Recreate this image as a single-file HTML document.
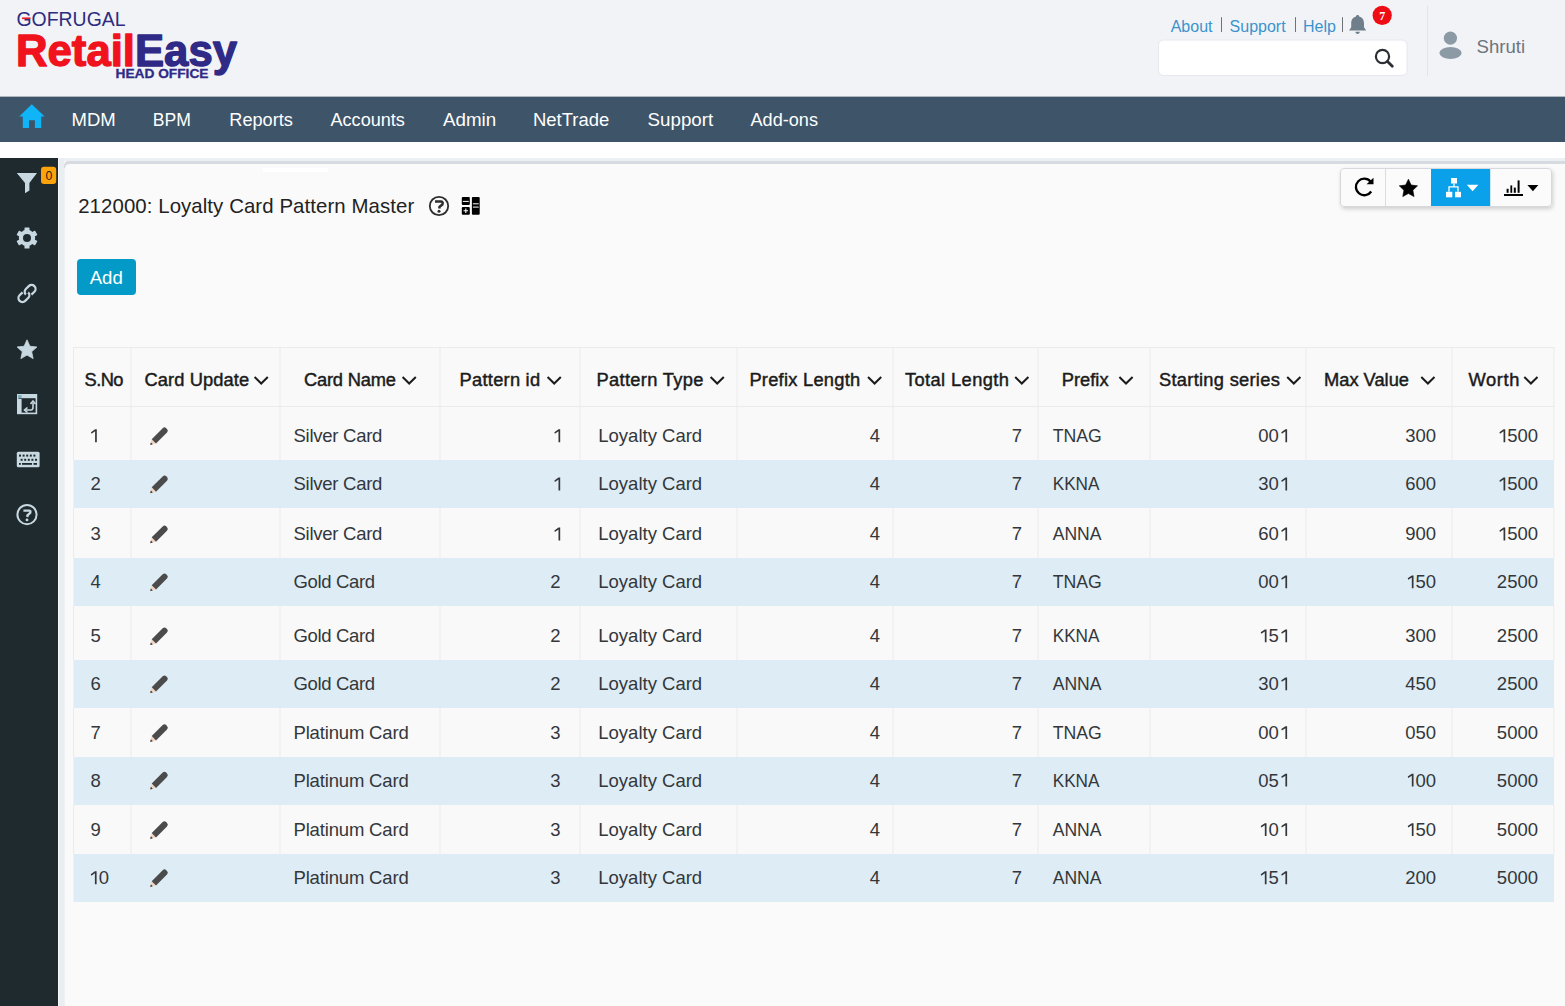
<!DOCTYPE html>
<html><head><meta charset="utf-8">
<style>
*{box-sizing:border-box;margin:0;padding:0}
html,body{width:1565px;height:1006px;overflow:hidden;background:#fafafa;font-family:"Liberation Sans",sans-serif}
svg{position:absolute;left:0;top:0}
</style></head><body>
<svg width="1565" height="1006" viewBox="0 0 1565 1006" font-family='"Liberation Sans", sans-serif'>

<rect x="0" y="0" width="1565" height="96" fill="#f2f3f7"/>
<rect x="0" y="96.6" width="1565" height="45.6" fill="#3e5469"/>
<rect x="0" y="142" width="1565" height="16" fill="#ffffff"/>
<rect x="0" y="158" width="58" height="848" fill="#1f2a2f"/>
<rect x="58" y="158" width="6" height="848" fill="#e9eef3"/>
<rect x="58" y="158" width="1" height="848" fill="#f6f8fa"/>
<rect x="64" y="158" width="1501" height="3" fill="#edf0f3"/>
<rect x="64" y="161" width="1501" height="845" fill="#fafafa"/>
<path d="M64,1006 L64,166 Q64,161 69,161 L1565,161 L1565,164 L70,164 Q65,164 65,168 L65,1006 Z" fill="#d6dbe1"/>
<rect x="64" y="168" width="1" height="838" fill="#eef1f4"/>
<rect x="263" y="168" width="65" height="4" fill="#ffffff"/>
<text x="16.5" y="25.6" font-size="20" fill="#2d2c80" textLength="109" lengthAdjust="spacingAndGlyphs">GOFRUGAL</text>
<rect x="22" y="17.4" width="8.5" height="1.7" fill="#e8232b"/>
<text x="16" y="66" font-size="44" font-weight="bold" stroke-width="1.3" stroke-linejoin="round" textLength="221" lengthAdjust="spacingAndGlyphs"><tspan fill="#f0121c" stroke="#f0121c">Retail</tspan><tspan fill="#2e2a86" stroke="#2e2a86">Easy</tspan></text>
<text x="115.5" y="78" font-size="13" font-weight="bold" fill="#2e2a86" stroke="#2e2a86" stroke-width="0.3" textLength="93" lengthAdjust="spacingAndGlyphs">HEAD OFFICE</text>
<text x="1170.7" y="31.9" font-size="16" fill="#3b93cc">About</text>
<text x="1229.6" y="31.9" font-size="16" fill="#3b93cc">Support</text>
<text x="1303" y="31.9" font-size="16" fill="#3b93cc">Help</text>
<rect x="1221" y="17.2" width="1" height="14.8" fill="#6e7378"/>
<rect x="1295" y="17.2" width="1" height="14.8" fill="#6e7378"/>
<rect x="1342" y="17.2" width="1" height="14.8" fill="#6e7378"/>
<path d="M1357.6,15 c1,0 1.6,.7 1.6,1.5 c3.4,.8 4.8,3.6 4.8,7.2 l0,3.6 l2.2,3.2 l-17.2,0 l2.2,-3.2 l0,-3.6 c0,-3.6 1.4,-6.4 4.8,-7.2 c0,-.8 .6,-1.5 1.6,-1.5 z M1355.4,31.8 l4.4,0 c0,1.3 -1,2.1 -2.2,2.1 c-1.2,0 -2.2,-.8 -2.2,-2.1 z" fill="#6e7e8b"/>
<circle cx="1382.2" cy="15.4" r="9.6" fill="#ee0d14"/>
<text x="1382.2" y="19.6" font-size="12" font-weight="bold" fill="#fff" text-anchor="middle" font-family="'Liberation Serif', serif">7</text>
<rect x="1158.5" y="40" width="248.5" height="35.5" rx="5" fill="#ffffff" stroke="#e5e8ee" stroke-width="1"/>
<circle cx="1382.5" cy="56.5" r="6.6" fill="none" stroke="#2b2f33" stroke-width="2.2"/>
<line x1="1387.5" y1="61.5" x2="1392.3" y2="66.3" stroke="#2b2f33" stroke-width="2.8" stroke-linecap="round"/>
<rect x="1427" y="6" width="1" height="70" fill="#e1e4e9"/>
<circle cx="1450.4" cy="38.2" r="6.6" fill="#8c9aa6"/>
<ellipse cx="1450.5" cy="53" rx="11.1" ry="6" fill="#8c9aa6"/>
<text x="1476.5" y="53.4" font-size="18.6" fill="#6d757d">Shruti</text>
<path d="M19.2,116.5 L31.8,104.2 L44.7,116.5 L41.2,116.5 L41.2,128 L34.9,128 L34.9,120.3 L29,120.3 L29,128 L22.8,128 L22.8,116.5 Z" fill="#0fb5f6"/>
<text x="71.6" y="125.9" font-size="19.2" fill="#ffffff" textLength="44.2" lengthAdjust="spacingAndGlyphs">MDM</text>
<text x="152.8" y="125.9" font-size="19.2" fill="#ffffff" textLength="38.1" lengthAdjust="spacingAndGlyphs">BPM</text>
<text x="229.3" y="125.9" font-size="19.2" fill="#ffffff" textLength="63.6" lengthAdjust="spacingAndGlyphs">Reports</text>
<text x="330.5" y="125.9" font-size="19.2" fill="#ffffff" textLength="74.4" lengthAdjust="spacingAndGlyphs">Accounts</text>
<text x="443" y="125.9" font-size="19.2" fill="#ffffff" textLength="53.2" lengthAdjust="spacingAndGlyphs">Admin</text>
<text x="533" y="125.9" font-size="19.2" fill="#ffffff" textLength="76.3" lengthAdjust="spacingAndGlyphs">NetTrade</text>
<text x="647.6" y="125.9" font-size="19.2" fill="#ffffff" textLength="65.6" lengthAdjust="spacingAndGlyphs">Support</text>
<text x="750.5" y="125.9" font-size="19.2" fill="#ffffff" textLength="67.5" lengthAdjust="spacingAndGlyphs">Add-ons</text>
<path d="M16.8,173 L37,173 L29.4,183 L29.4,190.5 L25,193.3 L25,183 Z" fill="#c8d8e0"/>
<rect x="41" y="166.8" width="15.2" height="17.2" rx="3" fill="#fca30c"/>
<text x="48.8" y="179.6" font-size="12.3" fill="#2e2108" text-anchor="middle">0</text>
<g transform="translate(27,238)" fill="#c8d8e0"><circle r="8.2"/><rect x="-2.5" y="-10.6" width="5" height="5" rx="0.6" transform="rotate(0)"/><rect x="-2.5" y="-10.6" width="5" height="5" rx="0.6" transform="rotate(60)"/><rect x="-2.5" y="-10.6" width="5" height="5" rx="0.6" transform="rotate(120)"/><rect x="-2.5" y="-10.6" width="5" height="5" rx="0.6" transform="rotate(180)"/><rect x="-2.5" y="-10.6" width="5" height="5" rx="0.6" transform="rotate(240)"/><rect x="-2.5" y="-10.6" width="5" height="5" rx="0.6" transform="rotate(300)"/><circle r="4" fill="#1f2a2f"/></g>
<g transform="translate(27,293.5) rotate(-45) scale(1.1)" fill="none" stroke="#c8d8e0" stroke-width="2.05" stroke-linecap="butt"><path d="M2.1,3.6 L5.9,3.6 A3.6,3.6 0 0,0 5.9,-3.6 L2.1,-3.6 A3.6,3.6 0 0,0 -1.5,0"/><path d="M-2.1,-3.6 L-5.9,-3.6 A3.6,3.6 0 0,0 -5.9,3.6 L-2.1,3.6 A3.6,3.6 0 0,0 1.5,0"/></g>
<path d="M27.00,339.80 L29.88,346.24 L36.89,346.99 L31.66,351.71 L33.11,358.61 L27.00,355.10 L20.89,358.61 L22.34,351.71 L17.11,346.99 L24.12,346.24 Z" fill="#c8d8e0" stroke="#c8d8e0" stroke-width="0.8" stroke-linejoin="round"/>
<rect x="17.8" y="394.8" width="18.6" height="18.6" fill="none" stroke="#c8d8e0" stroke-width="1.6"/>
<rect x="18" y="395" width="18" height="3.2" fill="#c8d8e0"/>
<rect x="18" y="399" width="3.6" height="14" fill="#c8d8e0"/>
<rect x="18" y="395" width="3.6" height="3.2" fill="#7fb0bf"/>
<path d="M25,410 L31,410 Q33,410 33,407 L33,402.5" fill="none" stroke="#c8d8e0" stroke-width="1.6"/>
<path d="M30.5,404 L33,401 L35.5,404" fill="none" stroke="#c8d8e0" stroke-width="1.6"/>
<path d="M27.5,407.5 L24.5,410 L27.5,412.5" fill="none" stroke="#c8d8e0" stroke-width="1.6"/>
<rect x="16.8" y="451.8" width="22.8" height="15.5" rx="1.5" fill="#c8d8e0"/>
<rect x="19" y="454.6" width="2" height="2" fill="#1f2a2f"/>
<rect x="22.6" y="454.6" width="2" height="2" fill="#1f2a2f"/>
<rect x="26.2" y="454.6" width="2" height="2" fill="#1f2a2f"/>
<rect x="29.8" y="454.6" width="2" height="2" fill="#1f2a2f"/>
<rect x="33.4" y="454.6" width="2" height="2" fill="#1f2a2f"/>
<rect x="20.6" y="458.8" width="2" height="2" fill="#1f2a2f"/>
<rect x="24.2" y="458.8" width="2" height="2" fill="#1f2a2f"/>
<rect x="27.8" y="458.8" width="2" height="2" fill="#1f2a2f"/>
<rect x="31.4" y="458.8" width="2" height="2" fill="#1f2a2f"/>
<rect x="35" y="458.8" width="2" height="2" fill="#1f2a2f"/>
<rect x="22" y="463" width="10" height="1.8" fill="#1f2a2f"/>
<rect x="19" y="463" width="1.8" height="1.8" fill="#1f2a2f"/>
<rect x="33.5" y="463" width="3.5" height="1.8" fill="#1f2a2f"/>
<circle cx="27" cy="514.6" r="9.6" fill="none" stroke="#c8d8e0" stroke-width="2"/>
<path d="M23.4,510.6 L29,510.6 Q31,510.6 30.2,512.8 L27.5,515.3 L27.3,517" fill="none" stroke="#c8d8e0" stroke-width="2.4"/>
<circle cx="27" cy="519.9" r="1.4" fill="#c8d8e0"/>
<text x="78.2" y="212.7" font-size="20.4" fill="#222" textLength="336" lengthAdjust="spacing">212000: Loyalty Card Pattern Master</text>
<circle cx="439" cy="206" r="9.2" fill="none" stroke="#2d2d2d" stroke-width="1.8"/>
<path d="M435,201.6 L441.2,201.6 Q443.4,201.8 442.4,204.4 L439.6,206.8 L439.2,208.6" fill="none" stroke="#2d2d2d" stroke-width="2.5"/>
<circle cx="439" cy="211.2" r="1.5" fill="#2d2d2d"/>
<rect x="461.8" y="197" width="8" height="8" rx="1" fill="#000"/>
<rect x="462.8" y="200.9" width="6" height="1" fill="#fff"/>
<rect x="461.8" y="207" width="8" height="7.7" rx="1" fill="#000"/>
<path d="M465.8,208.5 L465.8,213 M463.5,210.8 L468.1,210.8" stroke="#fff" stroke-width="1.1"/>
<rect x="471.9" y="197" width="7.8" height="17.7" rx="1" fill="#000"/>
<rect x="472.9" y="203.3" width="5.8" height="1" fill="#fff"/>
<rect x="472.9" y="206.6" width="5.8" height="1" fill="#fff"/>
<rect x="77" y="259" width="59" height="36" rx="4" fill="#039ac8"/>
<text x="89.7" y="283.6" font-size="18.6" fill="#fff">Add</text>
<defs><filter id="sh" x="-10%" y="-30%" width="120%" height="170%"><feGaussianBlur in="SourceAlpha" stdDeviation="2"/><feOffset dx="1" dy="2"/><feComponentTransfer><feFuncA type="linear" slope="0.18"/></feComponentTransfer><feMerge><feMergeNode/><feMergeNode in="SourceGraphic"/></feMerge></filter></defs>
<rect x="1340.5" y="168.5" width="211" height="38" rx="3.5" fill="#fbfbfb" stroke="#d6d8db" stroke-width="1" filter="url(#sh)"/>
<rect x="1385" y="169" width="1" height="37" fill="#dcdcdc"/>
<rect x="1431" y="169" width="59.2" height="37" fill="#0aa0ea"/>
<path d="M1371.2,191.5 A8.3,8.3 0 1,1 1370.5,181.5" fill="none" stroke="#000" stroke-width="2.3"/>
<path d="M1366.5,184.3 L1373.5,184.3 L1373.5,177.8 Z" fill="#000"/>
<path d="M1408.40,179.20 L1411.16,185.00 L1417.53,185.83 L1412.87,190.25 L1414.04,196.57 L1408.40,193.50 L1402.76,196.57 L1403.93,190.25 L1399.27,185.83 L1405.64,185.00 Z" fill="#000" stroke="#000" stroke-width="0.6" stroke-linejoin="round"/>
<rect x="1451" y="178" width="6" height="5.5" fill="#fff"/>
<path d="M1454,183.5 L1454,186.8 M1449,191.8 L1449,186.8 L1458,186.8 L1458,191.8" fill="none" stroke="#fff" stroke-width="1.3"/>
<rect x="1446" y="191.8" width="6.3" height="5.5" fill="#fff"/>
<rect x="1455" y="191.8" width="6" height="5.5" fill="#fff"/>
<path d="M1466.8,184.8 L1478.4,184.8 L1472.6,191.3 Z" fill="#fff"/>
<rect x="1504" y="194" width="19" height="2" fill="#000"/>
<rect x="1506.6" y="188.8" width="2" height="4" fill="#000"/>
<rect x="1510.4" y="185.4" width="1.8" height="7.4" fill="#000"/>
<rect x="1513.8" y="187.6" width="2" height="5.2" fill="#000"/>
<rect x="1517.6" y="180.4" width="2" height="12.4" fill="#000"/>
<path d="M1527.4,185 L1538.4,185 L1532.9,191.3 Z" fill="#000"/>
<rect x="73.5" y="347" width="1480.5" height="555" fill="#f9f9f9"/>
<rect x="73.5" y="460" width="1480.5" height="48" fill="#deecf5"/>
<rect x="73.5" y="558" width="1480.5" height="48" fill="#deecf5"/>
<rect x="73.5" y="660" width="1480.5" height="48" fill="#deecf5"/>
<rect x="73.5" y="757" width="1480.5" height="48" fill="#deecf5"/>
<rect x="73.5" y="854" width="1480.5" height="48" fill="#deecf5"/>
<rect x="73.5" y="347" width="1480.5" height="1" fill="#ebebeb"/>
<rect x="73.5" y="406" width="1480.5" height="1" fill="#ebebeb"/>
<rect x="73.0" y="347" width="1" height="60" fill="#ebebeb"/>
<rect x="73.0" y="407" width="1" height="53" fill="#ebebeb"/>
<rect x="73.0" y="508" width="1" height="50" fill="#ebebeb"/>
<rect x="73.0" y="606" width="1" height="54" fill="#ebebeb"/>
<rect x="73.0" y="708" width="1" height="49" fill="#ebebeb"/>
<rect x="73.0" y="805" width="1" height="49" fill="#ebebeb"/>
<rect x="130.5" y="347" width="1" height="60" fill="#ebebeb"/>
<rect x="130.5" y="407" width="1" height="53" fill="#ebebeb"/>
<rect x="130.5" y="508" width="1" height="50" fill="#ebebeb"/>
<rect x="130.5" y="606" width="1" height="54" fill="#ebebeb"/>
<rect x="130.5" y="708" width="1" height="49" fill="#ebebeb"/>
<rect x="130.5" y="805" width="1" height="49" fill="#ebebeb"/>
<rect x="279.5" y="347" width="1" height="60" fill="#ebebeb"/>
<rect x="279.5" y="407" width="1" height="53" fill="#ebebeb"/>
<rect x="279.5" y="508" width="1" height="50" fill="#ebebeb"/>
<rect x="279.5" y="606" width="1" height="54" fill="#ebebeb"/>
<rect x="279.5" y="708" width="1" height="49" fill="#ebebeb"/>
<rect x="279.5" y="805" width="1" height="49" fill="#ebebeb"/>
<rect x="439.5" y="347" width="1" height="60" fill="#ebebeb"/>
<rect x="439.5" y="407" width="1" height="53" fill="#ebebeb"/>
<rect x="439.5" y="508" width="1" height="50" fill="#ebebeb"/>
<rect x="439.5" y="606" width="1" height="54" fill="#ebebeb"/>
<rect x="439.5" y="708" width="1" height="49" fill="#ebebeb"/>
<rect x="439.5" y="805" width="1" height="49" fill="#ebebeb"/>
<rect x="579.5" y="347" width="1" height="60" fill="#ebebeb"/>
<rect x="579.5" y="407" width="1" height="53" fill="#ebebeb"/>
<rect x="579.5" y="508" width="1" height="50" fill="#ebebeb"/>
<rect x="579.5" y="606" width="1" height="54" fill="#ebebeb"/>
<rect x="579.5" y="708" width="1" height="49" fill="#ebebeb"/>
<rect x="579.5" y="805" width="1" height="49" fill="#ebebeb"/>
<rect x="736.5" y="347" width="1" height="60" fill="#ebebeb"/>
<rect x="736.5" y="407" width="1" height="53" fill="#ebebeb"/>
<rect x="736.5" y="508" width="1" height="50" fill="#ebebeb"/>
<rect x="736.5" y="606" width="1" height="54" fill="#ebebeb"/>
<rect x="736.5" y="708" width="1" height="49" fill="#ebebeb"/>
<rect x="736.5" y="805" width="1" height="49" fill="#ebebeb"/>
<rect x="892.5" y="347" width="1" height="60" fill="#ebebeb"/>
<rect x="892.5" y="407" width="1" height="53" fill="#ebebeb"/>
<rect x="892.5" y="508" width="1" height="50" fill="#ebebeb"/>
<rect x="892.5" y="606" width="1" height="54" fill="#ebebeb"/>
<rect x="892.5" y="708" width="1" height="49" fill="#ebebeb"/>
<rect x="892.5" y="805" width="1" height="49" fill="#ebebeb"/>
<rect x="1037.5" y="347" width="1" height="60" fill="#ebebeb"/>
<rect x="1037.5" y="407" width="1" height="53" fill="#ebebeb"/>
<rect x="1037.5" y="508" width="1" height="50" fill="#ebebeb"/>
<rect x="1037.5" y="606" width="1" height="54" fill="#ebebeb"/>
<rect x="1037.5" y="708" width="1" height="49" fill="#ebebeb"/>
<rect x="1037.5" y="805" width="1" height="49" fill="#ebebeb"/>
<rect x="1149.5" y="347" width="1" height="60" fill="#ebebeb"/>
<rect x="1149.5" y="407" width="1" height="53" fill="#ebebeb"/>
<rect x="1149.5" y="508" width="1" height="50" fill="#ebebeb"/>
<rect x="1149.5" y="606" width="1" height="54" fill="#ebebeb"/>
<rect x="1149.5" y="708" width="1" height="49" fill="#ebebeb"/>
<rect x="1149.5" y="805" width="1" height="49" fill="#ebebeb"/>
<rect x="1305.5" y="347" width="1" height="60" fill="#ebebeb"/>
<rect x="1305.5" y="407" width="1" height="53" fill="#ebebeb"/>
<rect x="1305.5" y="508" width="1" height="50" fill="#ebebeb"/>
<rect x="1305.5" y="606" width="1" height="54" fill="#ebebeb"/>
<rect x="1305.5" y="708" width="1" height="49" fill="#ebebeb"/>
<rect x="1305.5" y="805" width="1" height="49" fill="#ebebeb"/>
<rect x="1451.5" y="347" width="1" height="60" fill="#ebebeb"/>
<rect x="1451.5" y="407" width="1" height="53" fill="#ebebeb"/>
<rect x="1451.5" y="508" width="1" height="50" fill="#ebebeb"/>
<rect x="1451.5" y="606" width="1" height="54" fill="#ebebeb"/>
<rect x="1451.5" y="708" width="1" height="49" fill="#ebebeb"/>
<rect x="1451.5" y="805" width="1" height="49" fill="#ebebeb"/>
<rect x="1553.5" y="347" width="1" height="60" fill="#ebebeb"/>
<rect x="1553.5" y="407" width="1" height="53" fill="#ebebeb"/>
<rect x="1553.5" y="508" width="1" height="50" fill="#ebebeb"/>
<rect x="1553.5" y="606" width="1" height="54" fill="#ebebeb"/>
<rect x="1553.5" y="708" width="1" height="49" fill="#ebebeb"/>
<rect x="1553.5" y="805" width="1" height="49" fill="#ebebeb"/>
<text x="84.5" y="385.5" font-size="18.3" fill="#1b1b1b" stroke="#1b1b1b" stroke-width="0.45" textLength="39" lengthAdjust="spacing">S.No</text>
<text x="144.5" y="385.5" font-size="18.3" fill="#1b1b1b" stroke="#1b1b1b" stroke-width="0.45" textLength="104.6" lengthAdjust="spacing">Card Update</text>
<path d="M254.6,377 L261.2,383.5 L267.8,377" fill="none" stroke="#1b1b1b" stroke-width="2"/>
<text x="304" y="385.5" font-size="18.3" fill="#1b1b1b" stroke="#1b1b1b" stroke-width="0.45" textLength="91.9" lengthAdjust="spacing">Card Name</text>
<path d="M402.6,377 L409.2,383.5 L415.8,377" fill="none" stroke="#1b1b1b" stroke-width="2"/>
<text x="459.6" y="385.5" font-size="18.3" fill="#1b1b1b" stroke="#1b1b1b" stroke-width="0.45" textLength="80.5" lengthAdjust="spacing">Pattern id</text>
<path d="M547.6,377 L554.2,383.5 L560.8,377" fill="none" stroke="#1b1b1b" stroke-width="2"/>
<text x="596.6" y="385.5" font-size="18.3" fill="#1b1b1b" stroke="#1b1b1b" stroke-width="0.45" textLength="106.7" lengthAdjust="spacing">Pattern Type</text>
<path d="M710.6,377 L717.2,383.5 L723.8,377" fill="none" stroke="#1b1b1b" stroke-width="2"/>
<text x="749.4" y="385.5" font-size="18.3" fill="#1b1b1b" stroke="#1b1b1b" stroke-width="0.45" textLength="110.8" lengthAdjust="spacing">Prefix Length</text>
<path d="M868.0,377 L874.6,383.5 L881.1999999999999,377" fill="none" stroke="#1b1b1b" stroke-width="2"/>
<text x="905" y="385.5" font-size="18.3" fill="#1b1b1b" stroke="#1b1b1b" stroke-width="0.45" textLength="103.9" lengthAdjust="spacing">Total Length</text>
<path d="M1015.2,377 L1021.8000000000001,383.5 L1028.4,377" fill="none" stroke="#1b1b1b" stroke-width="2"/>
<text x="1061.8" y="385.5" font-size="18.3" fill="#1b1b1b" stroke="#1b1b1b" stroke-width="0.45">Prefix</text>
<path d="M1119.3999999999999,377 L1126.0,383.5 L1132.6,377" fill="none" stroke="#1b1b1b" stroke-width="2"/>
<text x="1159" y="385.5" font-size="18.3" fill="#1b1b1b" stroke="#1b1b1b" stroke-width="0.45" textLength="120.8" lengthAdjust="spacing">Starting series</text>
<path d="M1287.1999999999998,377 L1293.8,383.5 L1300.3999999999999,377" fill="none" stroke="#1b1b1b" stroke-width="2"/>
<text x="1324" y="385.5" font-size="18.3" fill="#1b1b1b" stroke="#1b1b1b" stroke-width="0.45" textLength="85" lengthAdjust="spacing">Max Value</text>
<path d="M1421.3,377 L1427.9,383.5 L1434.5,377" fill="none" stroke="#1b1b1b" stroke-width="2"/>
<text x="1468.4" y="385.5" font-size="18.3" fill="#1b1b1b" stroke="#1b1b1b" stroke-width="0.45" textLength="51" lengthAdjust="spacing">Worth</text>
<path d="M1524.3,377 L1530.9,383.5 L1537.5,377" fill="none" stroke="#1b1b1b" stroke-width="2"/>
<path transform="translate(90.8,442.2)" d="M4.3,-12.9 L6,-12.9 L6,0 L4.3,0 L4.3,-10.9 L0.7,-8.5 L0.2,-10 Z" fill="#33373b"/>
<g transform="translate(150.2,445.0) rotate(-45)"><path d="M0,0 L5.4,-3.05 L5.4,3.05 Z" fill="#f3d3c0"/><path d="M0,0 L2.3,-1.35 L2.3,1.35 Z" fill="#333"/><path d="M5.2,-3.05 L20.7,-3.05 Q23.2,-3.05 23.2,-0.6 L23.2,0.6 Q23.2,3.05 20.7,3.05 L5.2,3.05 Z" fill="#4b4b4b"/></g>
<text x="293.5" y="442.2" font-size="18.5" fill="#33373b" textLength="88.9" lengthAdjust="spacing">Silver Card</text>
<path transform="translate(554.2,442.2)" d="M4.3,-12.9 L6,-12.9 L6,0 L4.3,0 L4.3,-10.9 L0.7,-8.5 L0.2,-10 Z" fill="#33373b"/>
<text x="598.3" y="442.2" font-size="18.5" fill="#33373b">Loyalty Card</text>
<text x="880" y="442.2" font-size="18.5" fill="#33373b" text-anchor="end">4</text>
<text x="1022" y="442.2" font-size="18.5" fill="#33373b" text-anchor="end">7</text>
<text x="1052.7" y="442.2" font-size="18.5" fill="#33373b" textLength="49.1" lengthAdjust="spacingAndGlyphs">TNAG</text>
<text x="1289" y="442.2" font-size="18.5" fill="#33373b" text-anchor="end" xml:space="preserve">00 </text><path transform="translate(1281.11,442.2)" d="M4.3,-12.9 L6,-12.9 L6,0 L4.3,0 L4.3,-10.9 L0.7,-8.5 L0.2,-10 Z" fill="#33373b"/>
<text x="1436" y="442.2" font-size="18.5" fill="#33373b" text-anchor="end" xml:space="preserve">300</text>
<text x="1538" y="442.2" font-size="18.5" fill="#33373b" text-anchor="end" xml:space="preserve"> 500</text><path transform="translate(1499.24,442.2)" d="M4.3,-12.9 L6,-12.9 L6,0 L4.3,0 L4.3,-10.9 L0.7,-8.5 L0.2,-10 Z" fill="#33373b"/>
<text x="90.5" y="490.4" font-size="18.5" fill="#33373b">2</text>
<g transform="translate(150.2,493.2) rotate(-45)"><path d="M0,0 L5.4,-3.05 L5.4,3.05 Z" fill="#f3d3c0"/><path d="M0,0 L2.3,-1.35 L2.3,1.35 Z" fill="#333"/><path d="M5.2,-3.05 L20.7,-3.05 Q23.2,-3.05 23.2,-0.6 L23.2,0.6 Q23.2,3.05 20.7,3.05 L5.2,3.05 Z" fill="#4b4b4b"/></g>
<text x="293.5" y="490.4" font-size="18.5" fill="#33373b" textLength="88.9" lengthAdjust="spacing">Silver Card</text>
<path transform="translate(554.2,490.4)" d="M4.3,-12.9 L6,-12.9 L6,0 L4.3,0 L4.3,-10.9 L0.7,-8.5 L0.2,-10 Z" fill="#33373b"/>
<text x="598.3" y="490.4" font-size="18.5" fill="#33373b">Loyalty Card</text>
<text x="880" y="490.4" font-size="18.5" fill="#33373b" text-anchor="end">4</text>
<text x="1022" y="490.4" font-size="18.5" fill="#33373b" text-anchor="end">7</text>
<text x="1052.7" y="490.4" font-size="18.5" fill="#33373b" textLength="46.8" lengthAdjust="spacingAndGlyphs">KKNA</text>
<text x="1289" y="490.4" font-size="18.5" fill="#33373b" text-anchor="end" xml:space="preserve">30 </text><path transform="translate(1281.11,490.4)" d="M4.3,-12.9 L6,-12.9 L6,0 L4.3,0 L4.3,-10.9 L0.7,-8.5 L0.2,-10 Z" fill="#33373b"/>
<text x="1436" y="490.4" font-size="18.5" fill="#33373b" text-anchor="end" xml:space="preserve">600</text>
<text x="1538" y="490.4" font-size="18.5" fill="#33373b" text-anchor="end" xml:space="preserve"> 500</text><path transform="translate(1499.24,490.4)" d="M4.3,-12.9 L6,-12.9 L6,0 L4.3,0 L4.3,-10.9 L0.7,-8.5 L0.2,-10 Z" fill="#33373b"/>
<text x="90.5" y="540.4" font-size="18.5" fill="#33373b">3</text>
<g transform="translate(150.2,543.1999999999999) rotate(-45)"><path d="M0,0 L5.4,-3.05 L5.4,3.05 Z" fill="#f3d3c0"/><path d="M0,0 L2.3,-1.35 L2.3,1.35 Z" fill="#333"/><path d="M5.2,-3.05 L20.7,-3.05 Q23.2,-3.05 23.2,-0.6 L23.2,0.6 Q23.2,3.05 20.7,3.05 L5.2,3.05 Z" fill="#4b4b4b"/></g>
<text x="293.5" y="540.4" font-size="18.5" fill="#33373b" textLength="88.9" lengthAdjust="spacing">Silver Card</text>
<path transform="translate(554.2,540.4)" d="M4.3,-12.9 L6,-12.9 L6,0 L4.3,0 L4.3,-10.9 L0.7,-8.5 L0.2,-10 Z" fill="#33373b"/>
<text x="598.3" y="540.4" font-size="18.5" fill="#33373b">Loyalty Card</text>
<text x="880" y="540.4" font-size="18.5" fill="#33373b" text-anchor="end">4</text>
<text x="1022" y="540.4" font-size="18.5" fill="#33373b" text-anchor="end">7</text>
<text x="1052.7" y="540.4" font-size="18.5" fill="#33373b" textLength="48.8" lengthAdjust="spacingAndGlyphs">ANNA</text>
<text x="1289" y="540.4" font-size="18.5" fill="#33373b" text-anchor="end" xml:space="preserve">60 </text><path transform="translate(1281.11,540.4)" d="M4.3,-12.9 L6,-12.9 L6,0 L4.3,0 L4.3,-10.9 L0.7,-8.5 L0.2,-10 Z" fill="#33373b"/>
<text x="1436" y="540.4" font-size="18.5" fill="#33373b" text-anchor="end" xml:space="preserve">900</text>
<text x="1538" y="540.4" font-size="18.5" fill="#33373b" text-anchor="end" xml:space="preserve"> 500</text><path transform="translate(1499.24,540.4)" d="M4.3,-12.9 L6,-12.9 L6,0 L4.3,0 L4.3,-10.9 L0.7,-8.5 L0.2,-10 Z" fill="#33373b"/>
<text x="90.5" y="588.3" font-size="18.5" fill="#33373b">4</text>
<g transform="translate(150.2,591.0999999999999) rotate(-45)"><path d="M0,0 L5.4,-3.05 L5.4,3.05 Z" fill="#f3d3c0"/><path d="M0,0 L2.3,-1.35 L2.3,1.35 Z" fill="#333"/><path d="M5.2,-3.05 L20.7,-3.05 Q23.2,-3.05 23.2,-0.6 L23.2,0.6 Q23.2,3.05 20.7,3.05 L5.2,3.05 Z" fill="#4b4b4b"/></g>
<text x="293.5" y="588.3" font-size="18.5" fill="#33373b" textLength="81.5" lengthAdjust="spacing">Gold Card</text>
<text x="560.5" y="588.3" font-size="18.5" fill="#33373b" text-anchor="end">2</text>
<text x="598.3" y="588.3" font-size="18.5" fill="#33373b">Loyalty Card</text>
<text x="880" y="588.3" font-size="18.5" fill="#33373b" text-anchor="end">4</text>
<text x="1022" y="588.3" font-size="18.5" fill="#33373b" text-anchor="end">7</text>
<text x="1052.7" y="588.3" font-size="18.5" fill="#33373b" textLength="49.1" lengthAdjust="spacingAndGlyphs">TNAG</text>
<text x="1289" y="588.3" font-size="18.5" fill="#33373b" text-anchor="end" xml:space="preserve">00 </text><path transform="translate(1281.11,588.3)" d="M4.3,-12.9 L6,-12.9 L6,0 L4.3,0 L4.3,-10.9 L0.7,-8.5 L0.2,-10 Z" fill="#33373b"/>
<text x="1436" y="588.3" font-size="18.5" fill="#33373b" text-anchor="end" xml:space="preserve"> 50</text><path transform="translate(1407.53,588.3)" d="M4.3,-12.9 L6,-12.9 L6,0 L4.3,0 L4.3,-10.9 L0.7,-8.5 L0.2,-10 Z" fill="#33373b"/>
<text x="1538" y="588.3" font-size="18.5" fill="#33373b" text-anchor="end" xml:space="preserve">2500</text>
<text x="90.5" y="642.3" font-size="18.5" fill="#33373b">5</text>
<g transform="translate(150.2,645.0999999999999) rotate(-45)"><path d="M0,0 L5.4,-3.05 L5.4,3.05 Z" fill="#f3d3c0"/><path d="M0,0 L2.3,-1.35 L2.3,1.35 Z" fill="#333"/><path d="M5.2,-3.05 L20.7,-3.05 Q23.2,-3.05 23.2,-0.6 L23.2,0.6 Q23.2,3.05 20.7,3.05 L5.2,3.05 Z" fill="#4b4b4b"/></g>
<text x="293.5" y="642.3" font-size="18.5" fill="#33373b" textLength="81.5" lengthAdjust="spacing">Gold Card</text>
<text x="560.5" y="642.3" font-size="18.5" fill="#33373b" text-anchor="end">2</text>
<text x="598.3" y="642.3" font-size="18.5" fill="#33373b">Loyalty Card</text>
<text x="880" y="642.3" font-size="18.5" fill="#33373b" text-anchor="end">4</text>
<text x="1022" y="642.3" font-size="18.5" fill="#33373b" text-anchor="end">7</text>
<text x="1052.7" y="642.3" font-size="18.5" fill="#33373b" textLength="46.8" lengthAdjust="spacingAndGlyphs">KKNA</text>
<text x="1289" y="642.3" font-size="18.5" fill="#33373b" text-anchor="end" xml:space="preserve"> 5 </text><path transform="translate(1260.53,642.3)" d="M4.3,-12.9 L6,-12.9 L6,0 L4.3,0 L4.3,-10.9 L0.7,-8.5 L0.2,-10 Z" fill="#33373b"/><path transform="translate(1281.11,642.3)" d="M4.3,-12.9 L6,-12.9 L6,0 L4.3,0 L4.3,-10.9 L0.7,-8.5 L0.2,-10 Z" fill="#33373b"/>
<text x="1436" y="642.3" font-size="18.5" fill="#33373b" text-anchor="end" xml:space="preserve">300</text>
<text x="1538" y="642.3" font-size="18.5" fill="#33373b" text-anchor="end" xml:space="preserve">2500</text>
<text x="90.5" y="690.3" font-size="18.5" fill="#33373b">6</text>
<g transform="translate(150.2,693.0999999999999) rotate(-45)"><path d="M0,0 L5.4,-3.05 L5.4,3.05 Z" fill="#f3d3c0"/><path d="M0,0 L2.3,-1.35 L2.3,1.35 Z" fill="#333"/><path d="M5.2,-3.05 L20.7,-3.05 Q23.2,-3.05 23.2,-0.6 L23.2,0.6 Q23.2,3.05 20.7,3.05 L5.2,3.05 Z" fill="#4b4b4b"/></g>
<text x="293.5" y="690.3" font-size="18.5" fill="#33373b" textLength="81.5" lengthAdjust="spacing">Gold Card</text>
<text x="560.5" y="690.3" font-size="18.5" fill="#33373b" text-anchor="end">2</text>
<text x="598.3" y="690.3" font-size="18.5" fill="#33373b">Loyalty Card</text>
<text x="880" y="690.3" font-size="18.5" fill="#33373b" text-anchor="end">4</text>
<text x="1022" y="690.3" font-size="18.5" fill="#33373b" text-anchor="end">7</text>
<text x="1052.7" y="690.3" font-size="18.5" fill="#33373b" textLength="48.8" lengthAdjust="spacingAndGlyphs">ANNA</text>
<text x="1289" y="690.3" font-size="18.5" fill="#33373b" text-anchor="end" xml:space="preserve">30 </text><path transform="translate(1281.11,690.3)" d="M4.3,-12.9 L6,-12.9 L6,0 L4.3,0 L4.3,-10.9 L0.7,-8.5 L0.2,-10 Z" fill="#33373b"/>
<text x="1436" y="690.3" font-size="18.5" fill="#33373b" text-anchor="end" xml:space="preserve">450</text>
<text x="1538" y="690.3" font-size="18.5" fill="#33373b" text-anchor="end" xml:space="preserve">2500</text>
<text x="90.5" y="739.1" font-size="18.5" fill="#33373b">7</text>
<g transform="translate(150.2,741.9) rotate(-45)"><path d="M0,0 L5.4,-3.05 L5.4,3.05 Z" fill="#f3d3c0"/><path d="M0,0 L2.3,-1.35 L2.3,1.35 Z" fill="#333"/><path d="M5.2,-3.05 L20.7,-3.05 Q23.2,-3.05 23.2,-0.6 L23.2,0.6 Q23.2,3.05 20.7,3.05 L5.2,3.05 Z" fill="#4b4b4b"/></g>
<text x="293.5" y="739.1" font-size="18.5" fill="#33373b" textLength="115.2" lengthAdjust="spacing">Platinum Card</text>
<text x="560.5" y="739.1" font-size="18.5" fill="#33373b" text-anchor="end">3</text>
<text x="598.3" y="739.1" font-size="18.5" fill="#33373b">Loyalty Card</text>
<text x="880" y="739.1" font-size="18.5" fill="#33373b" text-anchor="end">4</text>
<text x="1022" y="739.1" font-size="18.5" fill="#33373b" text-anchor="end">7</text>
<text x="1052.7" y="739.1" font-size="18.5" fill="#33373b" textLength="49.1" lengthAdjust="spacingAndGlyphs">TNAG</text>
<text x="1289" y="739.1" font-size="18.5" fill="#33373b" text-anchor="end" xml:space="preserve">00 </text><path transform="translate(1281.11,739.1)" d="M4.3,-12.9 L6,-12.9 L6,0 L4.3,0 L4.3,-10.9 L0.7,-8.5 L0.2,-10 Z" fill="#33373b"/>
<text x="1436" y="739.1" font-size="18.5" fill="#33373b" text-anchor="end" xml:space="preserve">050</text>
<text x="1538" y="739.1" font-size="18.5" fill="#33373b" text-anchor="end" xml:space="preserve">5000</text>
<text x="90.5" y="786.6" font-size="18.5" fill="#33373b">8</text>
<g transform="translate(150.2,789.4) rotate(-45)"><path d="M0,0 L5.4,-3.05 L5.4,3.05 Z" fill="#f3d3c0"/><path d="M0,0 L2.3,-1.35 L2.3,1.35 Z" fill="#333"/><path d="M5.2,-3.05 L20.7,-3.05 Q23.2,-3.05 23.2,-0.6 L23.2,0.6 Q23.2,3.05 20.7,3.05 L5.2,3.05 Z" fill="#4b4b4b"/></g>
<text x="293.5" y="786.6" font-size="18.5" fill="#33373b" textLength="115.2" lengthAdjust="spacing">Platinum Card</text>
<text x="560.5" y="786.6" font-size="18.5" fill="#33373b" text-anchor="end">3</text>
<text x="598.3" y="786.6" font-size="18.5" fill="#33373b">Loyalty Card</text>
<text x="880" y="786.6" font-size="18.5" fill="#33373b" text-anchor="end">4</text>
<text x="1022" y="786.6" font-size="18.5" fill="#33373b" text-anchor="end">7</text>
<text x="1052.7" y="786.6" font-size="18.5" fill="#33373b" textLength="46.8" lengthAdjust="spacingAndGlyphs">KKNA</text>
<text x="1289" y="786.6" font-size="18.5" fill="#33373b" text-anchor="end" xml:space="preserve">05 </text><path transform="translate(1281.11,786.6)" d="M4.3,-12.9 L6,-12.9 L6,0 L4.3,0 L4.3,-10.9 L0.7,-8.5 L0.2,-10 Z" fill="#33373b"/>
<text x="1436" y="786.6" font-size="18.5" fill="#33373b" text-anchor="end" xml:space="preserve"> 00</text><path transform="translate(1407.53,786.6)" d="M4.3,-12.9 L6,-12.9 L6,0 L4.3,0 L4.3,-10.9 L0.7,-8.5 L0.2,-10 Z" fill="#33373b"/>
<text x="1538" y="786.6" font-size="18.5" fill="#33373b" text-anchor="end" xml:space="preserve">5000</text>
<text x="90.5" y="836.1" font-size="18.5" fill="#33373b">9</text>
<g transform="translate(150.2,838.9) rotate(-45)"><path d="M0,0 L5.4,-3.05 L5.4,3.05 Z" fill="#f3d3c0"/><path d="M0,0 L2.3,-1.35 L2.3,1.35 Z" fill="#333"/><path d="M5.2,-3.05 L20.7,-3.05 Q23.2,-3.05 23.2,-0.6 L23.2,0.6 Q23.2,3.05 20.7,3.05 L5.2,3.05 Z" fill="#4b4b4b"/></g>
<text x="293.5" y="836.1" font-size="18.5" fill="#33373b" textLength="115.2" lengthAdjust="spacing">Platinum Card</text>
<text x="560.5" y="836.1" font-size="18.5" fill="#33373b" text-anchor="end">3</text>
<text x="598.3" y="836.1" font-size="18.5" fill="#33373b">Loyalty Card</text>
<text x="880" y="836.1" font-size="18.5" fill="#33373b" text-anchor="end">4</text>
<text x="1022" y="836.1" font-size="18.5" fill="#33373b" text-anchor="end">7</text>
<text x="1052.7" y="836.1" font-size="18.5" fill="#33373b" textLength="48.8" lengthAdjust="spacingAndGlyphs">ANNA</text>
<text x="1289" y="836.1" font-size="18.5" fill="#33373b" text-anchor="end" xml:space="preserve"> 0 </text><path transform="translate(1260.53,836.1)" d="M4.3,-12.9 L6,-12.9 L6,0 L4.3,0 L4.3,-10.9 L0.7,-8.5 L0.2,-10 Z" fill="#33373b"/><path transform="translate(1281.11,836.1)" d="M4.3,-12.9 L6,-12.9 L6,0 L4.3,0 L4.3,-10.9 L0.7,-8.5 L0.2,-10 Z" fill="#33373b"/>
<text x="1436" y="836.1" font-size="18.5" fill="#33373b" text-anchor="end" xml:space="preserve"> 50</text><path transform="translate(1407.53,836.1)" d="M4.3,-12.9 L6,-12.9 L6,0 L4.3,0 L4.3,-10.9 L0.7,-8.5 L0.2,-10 Z" fill="#33373b"/>
<text x="1538" y="836.1" font-size="18.5" fill="#33373b" text-anchor="end" xml:space="preserve">5000</text>
<path transform="translate(90.6,884.2)" d="M4.3,-12.9 L6,-12.9 L6,0 L4.3,0 L4.3,-10.9 L0.7,-8.5 L0.2,-10 Z" fill="#33373b"/>
<text x="98.8" y="884.2" font-size="18.5" fill="#33373b">0</text>
<g transform="translate(150.2,887.0) rotate(-45)"><path d="M0,0 L5.4,-3.05 L5.4,3.05 Z" fill="#f3d3c0"/><path d="M0,0 L2.3,-1.35 L2.3,1.35 Z" fill="#333"/><path d="M5.2,-3.05 L20.7,-3.05 Q23.2,-3.05 23.2,-0.6 L23.2,0.6 Q23.2,3.05 20.7,3.05 L5.2,3.05 Z" fill="#4b4b4b"/></g>
<text x="293.5" y="884.2" font-size="18.5" fill="#33373b" textLength="115.2" lengthAdjust="spacing">Platinum Card</text>
<text x="560.5" y="884.2" font-size="18.5" fill="#33373b" text-anchor="end">3</text>
<text x="598.3" y="884.2" font-size="18.5" fill="#33373b">Loyalty Card</text>
<text x="880" y="884.2" font-size="18.5" fill="#33373b" text-anchor="end">4</text>
<text x="1022" y="884.2" font-size="18.5" fill="#33373b" text-anchor="end">7</text>
<text x="1052.7" y="884.2" font-size="18.5" fill="#33373b" textLength="48.8" lengthAdjust="spacingAndGlyphs">ANNA</text>
<text x="1289" y="884.2" font-size="18.5" fill="#33373b" text-anchor="end" xml:space="preserve"> 5 </text><path transform="translate(1260.53,884.2)" d="M4.3,-12.9 L6,-12.9 L6,0 L4.3,0 L4.3,-10.9 L0.7,-8.5 L0.2,-10 Z" fill="#33373b"/><path transform="translate(1281.11,884.2)" d="M4.3,-12.9 L6,-12.9 L6,0 L4.3,0 L4.3,-10.9 L0.7,-8.5 L0.2,-10 Z" fill="#33373b"/>
<text x="1436" y="884.2" font-size="18.5" fill="#33373b" text-anchor="end" xml:space="preserve">200</text>
<text x="1538" y="884.2" font-size="18.5" fill="#33373b" text-anchor="end" xml:space="preserve">5000</text>
</svg></body></html>
